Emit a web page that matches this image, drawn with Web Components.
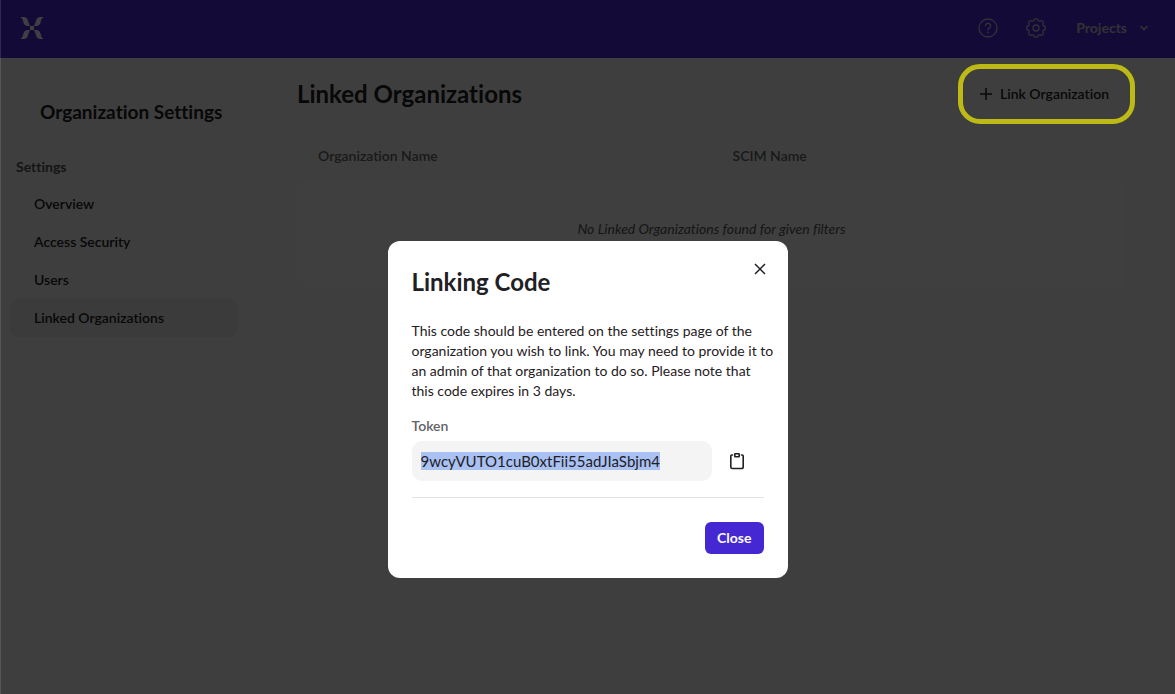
<!DOCTYPE html>
<html lang="en">
<head>
<meta charset="utf-8">
<meta name="viewport" content="width=device-width, initial-scale=1">
<title>Organization Settings</title>
<style>
  html, body { margin: 0; min-height: 100%; }
  body { background: #f7f7f7; font-family: Lato, "Liberation Sans", sans-serif; font-size: 14px; line-height: 20px; font-variant-ligatures: none; color: #1f2023; }
</style>
</head>
<body>
<settings-page></settings-page>
<script>
class BaseElement extends HTMLElement {
  constructor() {
    super();
    this.attachShadow({ mode: 'open' }).innerHTML =
      '<style>*{box-sizing:border-box}button,input{font:inherit;font-variant-ligatures:none;color:inherit}button{cursor:pointer;border:0;background:none;padding:0}svg{display:block}</style>' +
      this.constructor.template;
  }
}

customElements.define('top-bar', class extends BaseElement {
  static template = `
    <style>
      :host { display: flex; align-items: center; height: 58px; padding: 0 27px 2px 20px; background: #4c2ae0; color: #c8c4d0; }
      .logo { margin-right: auto; color: #fff; }
      button { height: 40px; display: flex; align-items: center; justify-content: center; }
      .icon { width: 48px; }
      .menu { gap: 13px; margin-left: 16px; font-weight: 700; }
    </style>
    <a class="logo" href="#" aria-label="Home">
      <svg width="24" height="22" viewBox="0 0 24 22" fill="currentColor">
        <path d="M0 0h3.500c2.700 0 3.800 1.500 4.600 4l.8 2.600C9.300 8 9.700 8.700 10.500 9H8.200C5.200 9 4.100 7.700 3.400 5.200L2.700 2.800C2.200 1.200 1.300.4 0 0z"/>
        <path d="M24 0h-3.500c-2.700 0-3.800 1.500-4.600 4l-.8 2.600c-.4 1.400-.8 2.100-1.600 2.400h2.300c3 0 4.100-1.300 4.800-3.800l.7-2.400c.5-1.600 1.400-2.400 2.700-2.800z"/>
        <path d="M0 22h3.500c2.700 0 3.800-1.500 4.600-4l.8-2.600c.4-1.400.8-2.100 1.600-2.400H8.200c-3 0-4.100 1.300-4.800 3.800L2.700 19.200C2.200 20.800 1.300 21.600 0 22z"/>
        <path d="M24 22h-3.500c-2.700 0-3.800-1.500-4.600-4l-.8-2.600c-.4-1.400-.8-2.100-1.600-2.400h2.300c3 0 4.100 1.300 4.800 3.800l.7 2.400c.5 1.600 1.400 2.400 2.700 2.800z"/>
        <rect x="10" y="9" width="4" height="4" rx=".5"/>
      </svg>
    </a>
    <button class="icon" aria-label="Help">
      <svg width="20" height="20" viewBox="0 0 20 20" fill="none" stroke="currentColor" stroke-width="1.300" stroke-linecap="round">
        <circle cx="10" cy="10" r="9"/><path d="M7.400 7.800a2.600 2.600 0 1 1 3.900 2.300c-.9.500-1.300.9-1.300 1.900"/><path d="M10 14.400v.2" stroke-width="1.600"/>
      </svg>
    </button>
    <button class="icon" aria-label="Settings">
      <svg width="20" height="20" viewBox="0 0 20 20" fill="none" stroke="currentColor" stroke-width="1.300" stroke-linejoin="round">
        <path d="M19.200 8.500V11.500Q15.500 12.300 17.500 15.500L15.500 17.500Q12.300 15.500 11.500 19.200H8.500Q7.700 15.500 4.500 17.500L2.500 15.500Q4.500 12.300 .8 11.500V8.500Q4.500 7.700 2.500 4.500L4.500 2.500Q7.700 4.500 8.500 .8H11.500Q12.300 4.500 15.500 2.500L17.500 4.500Q15.500 7.700 19.200 8.500Z"/>
        <circle cx="10" cy="10" r="3"/>
      </svg>
    </button>
    <button class="menu">Projects
      <svg width="8" height="6" viewBox="0 0 8 6" fill="none" stroke="currentColor" stroke-width="1.600" stroke-linecap="round"><path d="M1 1.500l3 3 3-3"/></svg>
    </button>`;
});

customElements.define('nav-item', class extends BaseElement {
  static template = `
    <style>
      :host { display: block; }
      a { display: block; padding: 9px 24px; border-radius: 8px; color: inherit; text-decoration: none; font-weight: 600; }
      :host([current]) a { background: #ebebeb; }
    </style>
    <a href="#"><slot></slot></a>`;
});

customElements.define('side-nav', class extends BaseElement {
  static template = `
    <style>
      :host { display: block; padding: 42px 10px 0; }
      h2 { margin: 0 0 33px 30px; font-size: 19px; line-height: 24px; font-weight: 700; }
      h3 { margin: 0 0 8px 6px; font-size: 14px; line-height: 20px; font-weight: 700; color: #555; }
    </style>
    <h2>Organization Settings</h2>
    <h3>Settings</h3>
    <nav aria-label="Settings"><slot></slot></nav>`;
});

customElements.define('highlight-ring', class extends BaseElement {
  static template = `
    <style>
      :host { position: relative; display: block; padding: 6px 24px 6px 20px; }
      :host::after { content: ""; position: absolute; inset: -8px -2px; z-index: 3; border: 5px solid #bdb915; border-radius: 22px; pointer-events: none; }
    </style>
    <slot></slot>`;
});

customElements.define('link-button', class extends BaseElement {
  static template = `
    <style>
      :host { display: block; }
      button { display: flex; align-items: center; gap: 8px; height: 32px; font-weight: 600; }
    </style>
    <button><svg width="12" height="12" viewBox="0 0 12 12" stroke="currentColor" stroke-width="1.500"><path d="M6 0v12M0 6h12"/></svg><slot></slot></button>`;
});

customElements.define('organization-table', class extends BaseElement {
  static template = `
    <style>
      :host { display: block; }
      table { width: 100%; table-layout: fixed; border-spacing: 0; }
      th { padding: 0 21px 16px; text-align: left; font-weight: 600; color: #666; }
      td { height: 106px; padding: 0 21px 12px; background: #fbfbfb; border-radius: 8px; text-align: center; font-style: italic; color: #555; }
    </style>
    <table>
      <thead><tr><th scope="col">Organization Name</th><th scope="col">SCIM Name</th></tr></thead>
      <tbody><tr><td colspan="2">No Linked Organizations found for given filters</td></tr></tbody>
    </table>`;
});

customElements.define('linking-dialog', class extends BaseElement {
  static template = `
    <style>
      :host { position: fixed; inset: 0; z-index: 2; display: flex; justify-content: center; align-items: flex-start; padding: 241px 16px 24px; background: rgba(0,0,0,.75); box-shadow: inset 1px 0 rgba(255,255,255,.12); }
      section { position: relative; width: 400px; max-width: 100%; padding: 24px; border-radius: 12px; background: #fff; }
      h1 { margin: 0 0 22px; font-size: 24px; line-height: 34px; font-weight: 700; }
      p { margin: 0 0 15px; white-space: nowrap; }
      @media (max-width: 431px) { p { white-space: normal; } }
      label { display: block; margin-bottom: 5px; font-weight: 600; color: #626266; }
      .row { display: flex; align-items: center; gap: 9px; padding-bottom: 16px; border-bottom: 1px solid #e3e3e5; }
      input { width: 300px; min-width: 0; height: 40px; padding: 0 9px; border: 0; border-radius: 10px; outline: 0; background: #f4f4f4; font-size: 15px; }
      input::selection { background: #a9c1f3; color: #1f2023; }
      .copy, .dismiss { display: grid; place-items: center; width: 32px; height: 32px; }
      .dismiss { position: absolute; top: 12px; right: 12px; }
      footer { display: flex; justify-content: flex-end; padding-top: 24px; }
      .close { height: 32px; padding: 0 12px; border-radius: 6px; background: #4628d3; color: #fff; font-weight: 700; }
    </style>
    <section role="dialog" aria-modal="true" aria-labelledby="title">
      <button class="dismiss" aria-label="Dismiss"><svg width="12" height="12" viewBox="0 0 12 12" stroke="currentColor" stroke-width="1.500"><path d="M1 1l10 10M11 1L1 11"/></svg></button>
      <h1 id="title">Linking Code</h1>
      <p>This code should be entered on the settings page of the<br>organization you wish to link. You may need to provide it to<br>an admin of that organization to do so. Please note that<br>this code expires in 3 days.</p>
      <label for="token">Token</label>
      <div class="row">
        <input id="token" type="text" readonly value="9wcyVUTO1cuB0xtFii55adJIaSbjm4">
        <button class="copy" aria-label="Copy token"><svg width="16" height="18" viewBox="0 0 16 18" fill="none" stroke="currentColor" stroke-width="1.600"><path d="M3.500 3h-.7A1 1 0 0 0 1.800 4v11a1.500 1.500 0 0 0 1.500 1.500h9.400a1.500 1.500 0 0 0 1.500-1.500V4a1 1 0 0 0-1-1h-.7" stroke-linecap="round"/><rect x="5.800" y="1.800" width="4.400" height="3" rx=".5"/></svg></button>
      </div>
      <footer><button class="close">Close</button></footer>
    </section>`;
  connectedCallback() {
    const input = this.shadowRoot.getElementById('token');
    input.focus();
    input.select();
  }
});

customElements.define('settings-page', class extends BaseElement {
  static template = `
    <style>
      :host { display: block; min-height: 100vh; }
      .body { display: grid; grid-template-columns: 247px minmax(0, 1fr); }
      main { padding: 14px 49px 24px 50px; }
      .heading { display: flex; align-items: center; justify-content: space-between; margin: 0 -7px 30px 0; }
      h1 { margin: 0; font-size: 24px; line-height: 30px; font-weight: 700; }
    </style>
    <top-bar></top-bar>
    <div class="body">
      <side-nav>
        <nav-item>Overview</nav-item>
        <nav-item>Access Security</nav-item>
        <nav-item>Users</nav-item>
        <nav-item current>Linked Organizations</nav-item>
      </side-nav>
      <main>
        <div class="heading"><h1>Linked Organizations</h1><highlight-ring><link-button>Link Organization</link-button></highlight-ring></div>
        <organization-table></organization-table>
      </main>
    </div>
    <linking-dialog></linking-dialog>`;
});
</script>
</body>
</html>
